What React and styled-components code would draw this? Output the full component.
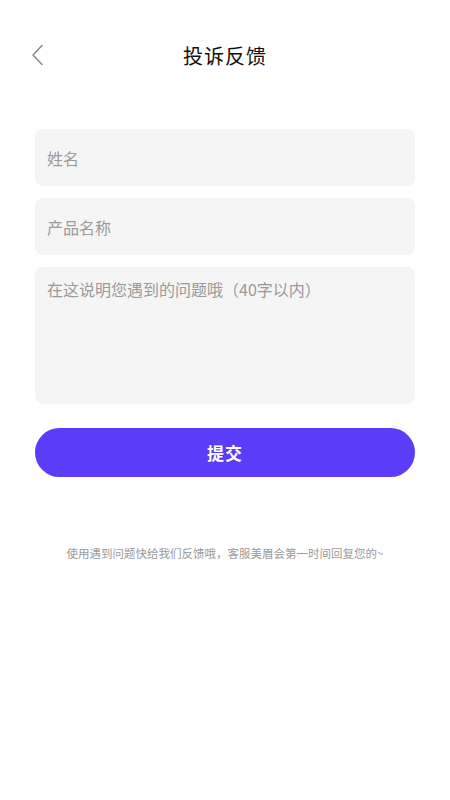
import React from "react";
import styled, { createGlobalStyle } from "styled-components";

const GlobalStyle = createGlobalStyle`
  html, body {
    margin: 0;
    padding: 0;
    background: #ffffff;
    font-family: "Noto Sans CJK SC", "Noto Sans", sans-serif;
  }
  * { box-sizing: border-box; }
`;

const Page = styled.div`
  width: 450px;
  min-height: 800px;
  background: #fff;
`;

const NavBar = styled.div`
  position: relative;
  height: 90px;
  padding-top: 20px;
  display: flex;
  align-items: center;
  justify-content: center;
`;

const BackButton = styled.button`
  position: absolute;
  left: 26px;
  top: 40px;
  width: 24px;
  height: 30px;
  padding: 0;
  border: none;
  background: none;
  display: flex;
  align-items: center;
  justify-content: center;
  cursor: pointer;
`;

const Title = styled.h1`
  margin: 0;
  font-size: 20px;
  font-weight: 400;
  color: #111;
  letter-spacing: 1px;
`;

const Form = styled.form`
  display: flex;
  flex-direction: column;
  gap: 12px;
  padding: 39px 35px 0;
`;

const Input = styled.input`
  height: 57px;
  border: none;
  outline: none;
  border-radius: 8px;
  background: #f5f5f5;
  padding: 0 12px;
  font-family: inherit;
  font-size: 16px;
  color: #333;
  &::placeholder { color: #9a9a9a; }
`;

const TextArea = styled.textarea`
  height: 137px;
  border: none;
  outline: none;
  resize: none;
  border-radius: 8px;
  background: #f5f5f5;
  padding: 11px 12px;
  font-family: inherit;
  font-size: 16px;
  line-height: 22px;
  color: #333;
  &::placeholder { color: #9a9a9a; }
`;

const SubmitButton = styled.button`
  margin-top: 12px;
  height: 49px;
  border: none;
  border-radius: 25px;
  background: #5b3cf9;
  color: #fff;
  font-family: inherit;
  font-size: 17px;
  font-weight: 700;
  letter-spacing: 1px;
  cursor: pointer;
`;

const Footer = styled.p`
  margin: 68px 0 0;
  text-align: center;
  font-size: 11.5px;
  color: #9a9a9a;
`;

export default function App() {
  return (
    <Page>
      <GlobalStyle />
      <NavBar>
        <BackButton aria-label="back">
          <svg width="14" height="22" viewBox="0 0 14 22" fill="none">
            <path d="M11 1.5 L2 11 L11 20.5" stroke="#888" strokeWidth="1.5" strokeLinecap="round" strokeLinejoin="round" />
          </svg>
        </BackButton>
        <Title>投诉反馈</Title>
      </NavBar>
      <Form onSubmit={(e) => e.preventDefault()}>
        <Input placeholder="姓名" />
        <Input placeholder="产品名称" />
        <TextArea placeholder="在这说明您遇到的问题哦（40字以内）" />
        <SubmitButton type="submit">提交</SubmitButton>
      </Form>
      <Footer>使用遇到问题快给我们反馈哦，客服美眉会第一时间回复您的~</Footer>
    </Page>
  );
}
